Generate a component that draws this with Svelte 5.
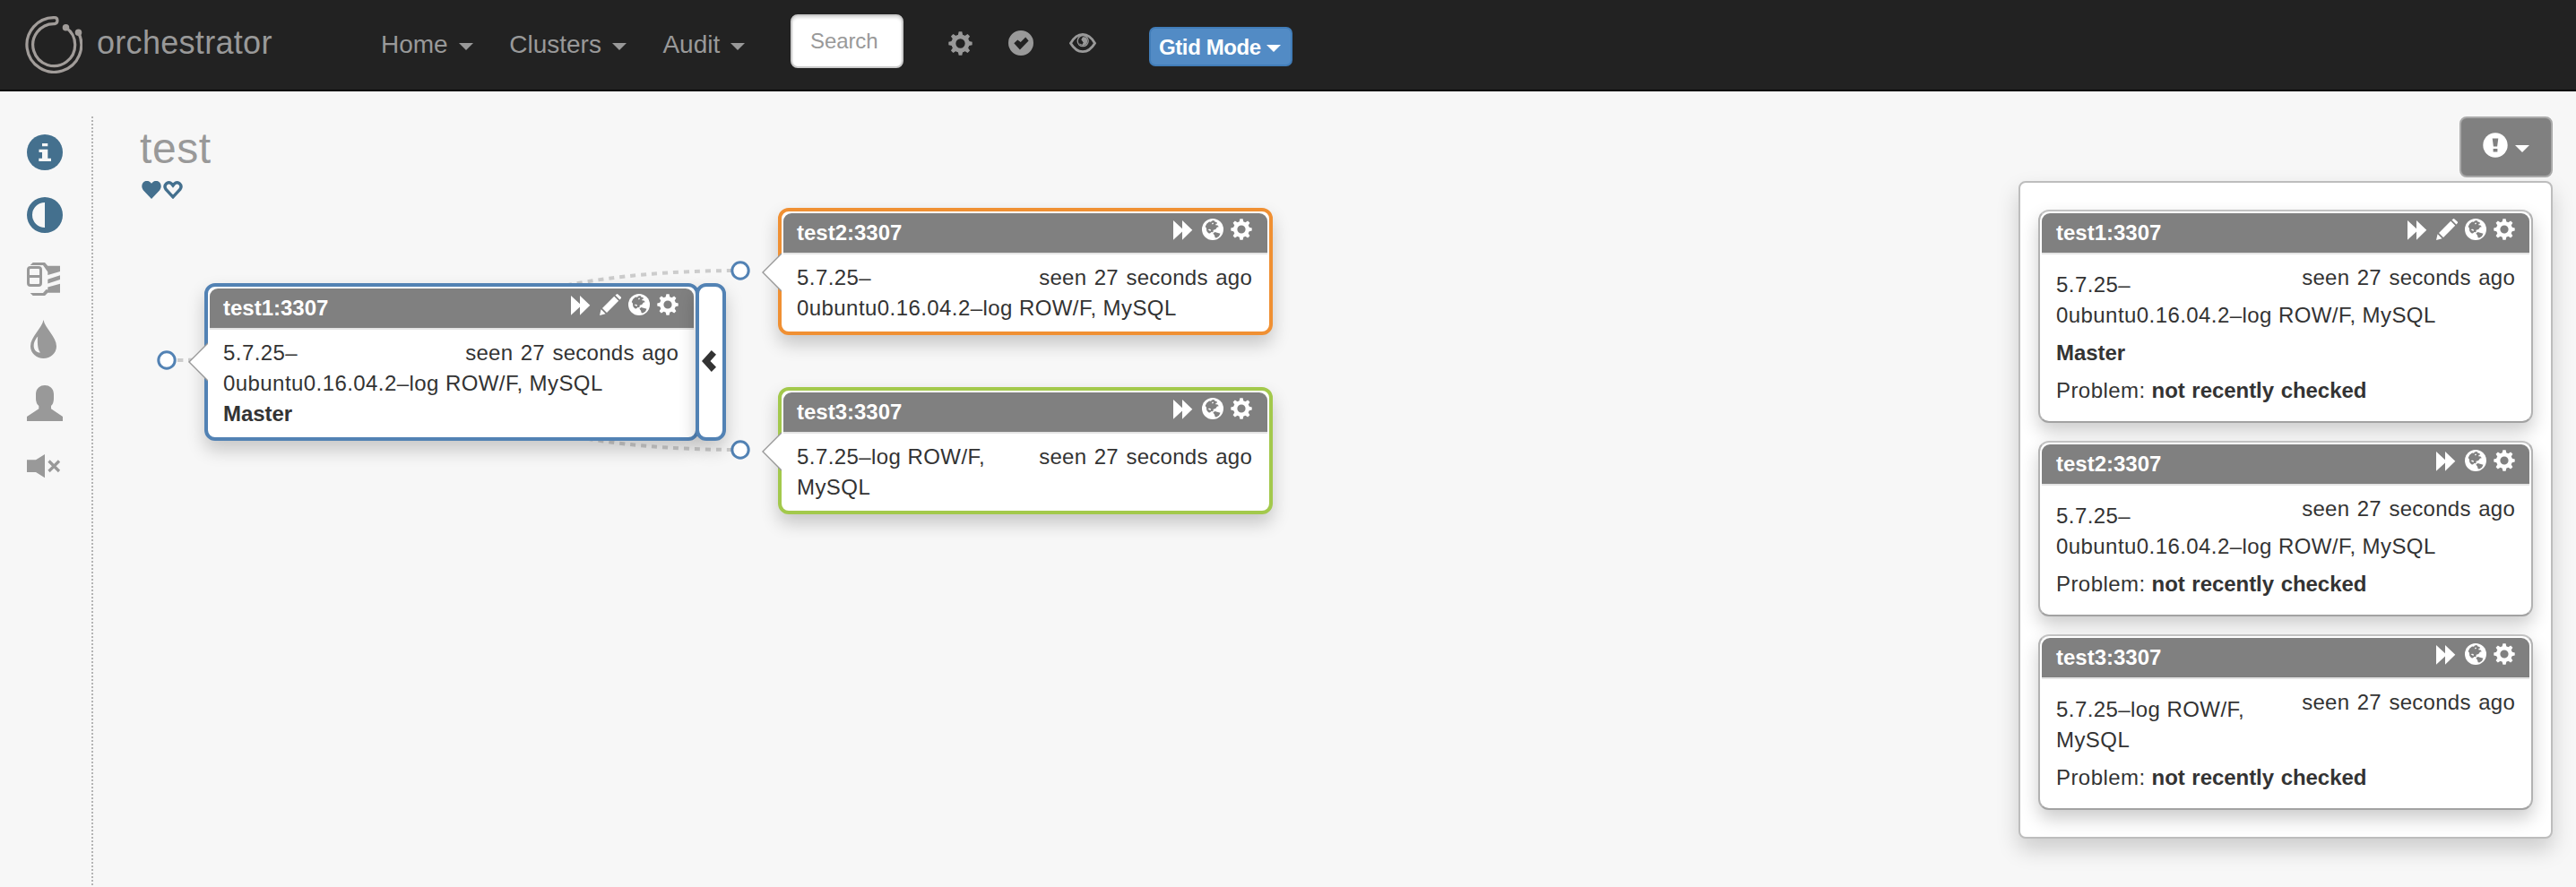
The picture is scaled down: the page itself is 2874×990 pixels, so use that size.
<script>
  const menus = ['Home', 'Clusters', 'Audit'];
  const nodes = [
    { name: 'test1:3307', lines: ['5.7.25–', '0ubuntu0.16.04.2–log ROW/F, MySQL'], master: true, color: '#5282b4', x: 228, y: 316 },
    { name: 'test2:3307', lines: ['5.7.25–', '0ubuntu0.16.04.2–log ROW/F, MySQL'], master: false, color: '#f09033', x: 868, y: 232 },
    { name: 'test3:3307', lines: ['5.7.25–log ROW/F,', 'MySQL'], master: false, color: '#a3c94c', x: 868, y: 432 }
  ];
  const anchors = [[186, 402], [826, 302], [826, 502]];
  const teeth = [0, 45, 90, 135, 180, 225, 270, 315];
</script>

{#snippet gear()}
  <svg viewBox="0 0 24 24">
    <circle cx="12" cy="12" r="6.8" fill="none" stroke="currentColor" stroke-width="4.4" />
    {#each teeth as a}
      <path d="M10.4 .3h3.2l.9 4h-5z" fill="currentColor" transform={`rotate(${a} 12 12)`} />
    {/each}
  </svg>
{/snippet}

{#snippet tools(master)}
  <span class="tools">
    <svg viewBox="0 0 24 24" fill="currentColor"><path d="M0 2l10 9.3V2l11.3 10.8L10 23.8v-9.4L0 23.8z" /></svg>
    {#if master}
      <svg viewBox="0 0 24 24" fill="currentColor">
        <path d="M0 24l1.6-6.7 5 5zM3 16L16.2 2.8l5 5L8 21zM17.5 1.6L18.8.4q.8-.7 1.6 0L23.8 3.600q.6.8 0 1.500L22.500 6.500z" />
      </svg>
    {/if}
    <svg viewBox="0 0 24 24">
      <circle cx="12" cy="12" r="12" fill="currentColor" />
      <path fill="#808080" d="M5.300 5.800L8 3.400l2 .4 1-1.400 2.400-.3 1 1.500 2 .3.700 1.600-1.500.3-.4 1.500 2.300.1 1.300 1.800-1.800.4-1.800 2.400-2.500.8-.3 2.400-1.900-.1-1.600 1.500-1.700-.4-1.900-2.300-.4-3.300-1.200-1.500z" />
      <path fill="#808080" d="M12.400 16.400l2-1.300 2.600.6 3.500 1.100-1.500 2.900-2.800 1.900-1.500-.3-.7-2.600z" />
      <path fill="currentColor" d="M11 5l1.500-.4.4 1.200-1.300.6zM6.500 12l2.300-.3 1.300 1-.8 1.200z" />
    </svg>
    {@render gear()}
  </span>
{/snippet}

{#snippet card(node, problem)}
  <article class="card" class:problem style:border-color={problem ? null : node.color}>
    <header><h3>{node.name}</h3>{@render tools(node.master)}</header>
    <div class="body">
      <div class="row"><p>{node.lines[0]}</p><span>seen 27 seconds ago</span></div>
      <p class="rest">{node.lines[1]}</p>
      {#if node.master}<p><b>Master</b></p>{/if}
      {#if problem}<p>Problem: <b>not recently checked</b></p>{/if}
    </div>
  </article>
{/snippet}

<div class="page">
  <nav>
    <svg class="logo" viewBox="0 0 64 64" fill="none" stroke="#a19c99" stroke-width="3.200">
      <path d="M45.500 12.700A23.500 23.500 0 1 1 33 8.600Q36 8 36 5Q36 1.600 33 1.600A30.400 30.400 0 1 0 59.500 18.300" />
      <circle cx="45.500" cy="12.700" r="2.200" fill="#a19c99" />
      <circle cx="59.500" cy="18.300" r="2.200" fill="#a19c99" />
    </svg>
    <span class="brand">orchestrator</span>
    <div class="menus">
      {#each menus as m}<span>{m}<i class="caret"></i></span>{/each}
    </div>
    <div class="search">Search</div>
    <div class="status">
      <span class="cog">{@render gear()}</span>
      <svg class="ok" viewBox="0 0 28 28" fill="currentColor"><path fill-rule="evenodd" d="M14 0a14 14 0 1 1 0 28a14 14 0 1 1 0-28M6.300 14.200l4-3.600 3.400 2.300 5.500-5.300 3.400 3.900-9.700 9.900z" /></svg>
      <svg class="eye" viewBox="0 0 30 22" fill="none" stroke="currentColor">
        <path stroke-width="2.800" d="M1.500 11.200Q7 1.600 15 1.400Q23 1.600 28.500 11.200Q23 20.500 15 20.600Q7 20.500 1.500 11.200z" />
        <circle cx="15.200" cy="8.700" r="6" stroke-width="1.300" />
        <path fill="currentColor" stroke="none" d="M15 4.200q5-.6 5.200 4.500-.2 4.900-5 5.200-3-.1-4.100-2.600l3.300 1.400 1.300-2.200-2.400-3.200z" />
      </svg>
    </div>
    <button class="gtid">Gtid Mode<i class="caret"></i></button>
  </nav>

  <main>
    <aside>
      <svg class="active" viewBox="0 0 40 40" fill="currentColor"><circle cx="20" cy="20" r="20" /><path fill="#f7f7f7" d="M17 10h6.300v3.300H17zM13.500 16.700h9.800v10H27V30H13.300v-3.300H17V20h-3.500z" /></svg>
      <svg class="active" viewBox="0 0 40 40" fill="currentColor"><path fill-rule="evenodd" d="M20 0a20 20 0 1 1 0 40a20 20 0 1 1 0-40M20 6a14 14 0 0 0 0 28z" /></svg>
      <svg viewBox="0 0 40 40" fill="currentColor">
        <rect x="1.500" y="8.500" width="14" height="20" rx="2.500" fill="none" stroke="currentColor" stroke-width="3" />
        <path d="M2 17h13v3H2zM3.700 6L6.700 3H20l3.300 3.700H37V13L23.300 17v-3.500L18 6zM23.300 21.700L37 17.300v4.800l-13.700 4.500zM3.700 37l3 3H20l3.300-3.300H37V26.700L23.300 30.500V33.500L21.500 33L18 37z" />
      </svg>
      <svg viewBox="0 0 40 40" fill="currentColor" overflow="visible"><path fill-rule="evenodd" d="M18.500-3C20 6 33 16 33 26.500A14.500 13.500 0 0 1 4 26.500C4 16 17 6 18.500-3M12.200 15.500C4.500 24 7.500 34 15 33.500C12.500 31 11.300 24 12.200 15.500" /></svg>
      <svg viewBox="0 0 40 40" fill="currentColor"><path d="M10 10C10-3.300 30-3.300 30 10V15Q30 20 27 23V26.300L40 35V40H0V35L13.300 26.300V23Q10 20 10 15z" /></svg>
      <svg viewBox="0 0 40 40" fill="currentColor"><path d="M0 13.300h10L20 7v26.300l-10-6.300H0z" /><path fill="none" stroke="currentColor" stroke-width="3.200" d="M24.500 14.500l11.500 11.500M36 14.500L24.500 26" /></svg>
    </aside>

    <section class="heading">
      <h1>test</h1>
      <div class="hearts">
        <svg viewBox="0 0 22 20" fill="currentColor"><path d="M11 20L2 10.500C-3 4 4-3.300 9.500 1.200L11 2.800L12.500 1.200C18-3.300 25 4 20 10.500z" /></svg>
        <svg viewBox="0 0 22 20" fill="none" stroke="currentColor" stroke-width="3.400"><path d="M11 17.800L3.200 9.500C-.3 4.500 5.500-.8 9.500 3.100L11 5L12.500 3.100C16.500-.8 22.300 4.500 18.800 9.500z" /></svg>
      </div>
    </section>

    <div class="problems">
      <button class="alert">
        <svg viewBox="0 0 28 28" fill="currentColor"><circle cx="14" cy="14" r="13.700" /><path fill="#808080" d="M10.700 6.500h6.600l-1.200 9h-4.200zM11.600 18h4.800v3.600h-4.800z" /></svg>
        <i class="caret"></i>
      </button>
      <div class="panel">
        {#each nodes as n}{@render card(n, true)}{/each}
      </div>
    </div>
  </main>

  <div class="topology">
    <svg class="links" viewBox="0 0 1500 700" fill="none">
      <g stroke="#ccc" stroke-width="4" stroke-dasharray="6 6">
        <path d="M186 402H228" />
        <path d="M186 402C506 402 506 302 826 302" />
        <path d="M186 402C506 402 506 502 826 502" />
      </g>
      {#each anchors as [x, y]}
        <circle cx={x} cy={y} r="9.200" fill="#fff" stroke="#5282b4" stroke-width="3" />
      {/each}
    </svg>
    {#each nodes as n, i}
      <div class="node" style:left={`${n.x}px`} style:top={`${n.y}px`}>
        {@render card(n, false)}
        {#if n.master}
          <div class="fold"><svg viewBox="0 0 16 24" fill="#333"><path d="M0 12L10.800 0l5.200 4.800L9.500 12l6.500 6.800L10.800 24z" /></svg></div>
        {/if}
        <svg class="pointer" style:top={`${anchors[i][1] + 2 - n.y - 22}px`} viewBox="0 0 22 44"><path d="M22 1L1 22L22 43" fill="#fff" stroke="#999" stroke-width="1.400" /></svg>
      </div>
    {/each}
  </div>
</div>

<style>
  :global(body) { background: #f7f7f7; overflow: hidden; }
  .page {
    position: relative; box-sizing: border-box; width: 2874px; height: 990px; overflow: hidden;
    background: #f7f7f7; color: #333; font: 24px/34px "Liberation Sans", Arial, sans-serif;
  }
  svg { display: block; flex: none; }
  h1, h3, p { margin: 0; font-weight: normal; }
  nav { display: flex; align-items: flex-start; height: 100px; background: #222; border-bottom: 2px solid #080808; color: #999; }
  .logo { width: 64px; height: 64px; margin: 18px 0 0 28px; }
  .brand { width: 317px; margin: 28px 0 0 16px; font-size: 36px; line-height: 40px; letter-spacing: .3px; }
  .menus { display: flex; width: 457px; gap: 40.500px; padding-top: 30px; font-size: 28px; line-height: 40px; }
  .menus span { display: flex; align-items: center; }
  .caret { width: 0; border: 8px solid transparent; border-top-color: currentColor; border-bottom: 0; margin-left: 12px; margin-top: 4px; }
  .search { box-sizing: border-box; width: 126px; height: 60px; margin-top: 16px; padding: 11px 20px; background: #fff; border: 2px solid #ccc; border-radius: 8px; box-shadow: inset 0 2px 3px #0002; line-height: 34px; letter-spacing: -.1px; }
  .status { display: flex; align-items: center; gap: 40px; margin: 34px 0 0 50px; height: 28px; }
  .cog svg { width: 27px; height: 27px; }
  .ok { width: 28px; height: 28px; }
  .eye { width: 30px; height: 22px; }
  .gtid { box-sizing: border-box; display: flex; align-items: center; width: 160px; height: 44px; margin: 30px 0 0 59px; padding: 1px 0 0 9px; white-space: nowrap; background: #528bc5; border: 2px solid #417db9; border-radius: 7px; color: #fff; font: bold 24px/34px "Liberation Sans", Arial, sans-serif; letter-spacing: -.4px; }
  .gtid .caret { margin-left: 6px; margin-top: 3px; }
  main { display: flex; align-items: flex-start; padding-top: 28px; }
  aside { position: relative; box-sizing: border-box; display: flex; flex-direction: column; gap: 30px; width: 104px; height: 860px; padding: 20px 0 0 30px; color: #999; background: repeating-linear-gradient(#b4b4b4 0 2px, transparent 2px 4px) right / 2px 100% no-repeat; }
  aside svg { width: 40px; height: 40px; }
  .active, .hearts { color: #44708e; }
  .heading { padding: 12px 0 0 52px; }
  h1 { font-size: 48px; line-height: 48px; color: #999; letter-spacing: .6px; }
  .hearts { display: flex; gap: 2px; padding: 12px 0 0 2px; }
  .hearts svg { width: 22px; height: 20px; }
  .problems { display: flex; flex-direction: column; align-items: flex-end; gap: 4px; margin: 0 26px 0 auto; }
  .alert { box-sizing: border-box; display: flex; width: 104px; height: 68px; padding: 16px 0 0 24px; background: #808080; border: 2px solid #aaa; border-radius: 8px; color: #fff; }
  .alert svg { width: 28px; height: 28px; }
  .alert .caret { margin: 14px 0 0 8px; }
  .panel { box-sizing: border-box; display: flex; flex-direction: column; gap: 20px; width: 596px; height: 734px; padding: 30px 20px; background: #fff; border: 2px solid #bdbdbd; border-radius: 8px; box-shadow: 0 12px 24px rgba(0,0,0,.175); }
  .card { box-sizing: border-box; width: 552px; padding: 2px; background: #fff; border: 4px solid; border-radius: 12px; box-shadow: 0 10px 20px rgba(0,0,0,.2); }
  .card.problem { border: 2px solid; border-color: #c2c2c2 #b2b2b2 #a2a2a2; border-radius: 12px; }
  .card header { display: flex; justify-content: space-between; height: 44px; padding: 0 17px 0 15px; background: #808080; border-bottom: 2px solid #e4e4e4; border-radius: 9px 9px 0 0; color: #fff; }
  .card.problem header { padding: 0 16px; }
  h3 { padding-top: 5px; font: bold 24px/34px "Liberation Sans", Arial, sans-serif; }
  .tools { display: flex; gap: 8px; padding-top: 6px; }
  .tools svg { width: 24px; height: 24px; }
  .body { padding: 9px 17px 7px 15px; letter-spacing: .43px; white-space: nowrap; }
  .row { display: flex; justify-content: space-between; }
  .row span { letter-spacing: .27px; word-spacing: 1.500px; }
  b { letter-spacing: -.05px; word-spacing: 1px; }
  .problem .body { padding: 9px 16px 15px; }
  .problem .body p:not(.rest) { padding-top: 8px; }
  .node { position: absolute; display: flex; }
  .fold { box-sizing: border-box; display: flex; align-items: center; justify-content: center; width: 34px; margin-left: -4px; padding-right: 4px; padding-bottom: 2px; background: #fff; border: 4px solid #5282b4; border-radius: 12px; box-shadow: 0 10px 20px rgba(0,0,0,.2); }
  .fold svg { width: 16px; height: 24px; }
  .pointer { position: absolute; left: -18px; width: 22px; height: 44px; }
  .links { position: absolute; left: 0; top: 0; width: 1500px; height: 700px; }
</style>
